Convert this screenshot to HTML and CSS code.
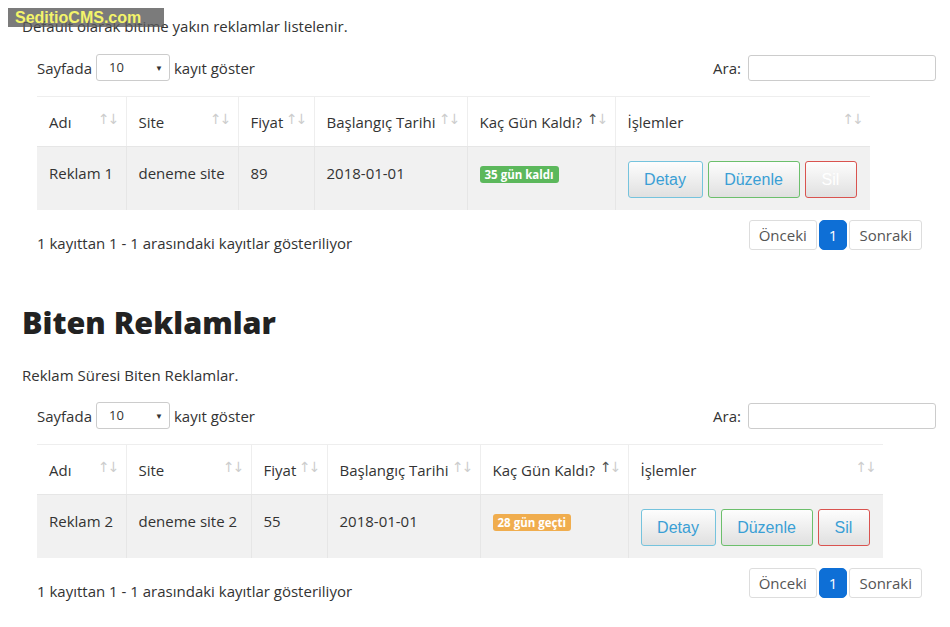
FILE: index.html
```html
<!DOCTYPE html>
<html lang="tr">
<head>
  <meta charset="UTF-8">
  <title>Reklamlar</title>
  <link rel="stylesheet" href="styles.css">
</head>
<body>
<div class="watermark">SeditioCMS.com</div>
<div class="page">
  <p class="desc first">Default olarak bitime yakın reklamlar listelenir.</p>
  <div class="dt">
    <div class="dt-top">
      <label class="length">Sayfada <span class="select">10<i class="caret">▼</i></span> kayıt göster</label>
      <label class="search">Ara: <span class="input"></span></label>
    </div>
    <table class="tbl t1">
      <colgroup>
        <col class="c-name"><col class="c-site"><col class="c-price"><col class="c-date"><col class="c-days"><col class="c-ops">
      </colgroup>
      <thead>
        <tr>
          <th>Adı<span class="sort">↑↓</span></th>
          <th>Site<span class="sort">↑↓</span></th>
          <th>Fiyat<span class="sort">↑↓</span></th>
          <th>Başlangıç Tarihi<span class="sort">↑↓</span></th>
          <th>Kaç Gün Kaldı?<span class="sort"><b>↑</b>↓</span></th>
          <th>İşlemler<span class="sort">↑↓</span></th>
        </tr>
      </thead>
      <tbody>
        <tr>
          <td>Reklam 1</td>
          <td>deneme site</td>
          <td>89</td>
          <td>2018-01-01</td>
          <td><span class="label label-green">35 gün kaldı</span></td>
          <td class="ops">
            <div class="btns">
              <a class="btn btn-info">Detay</a>
              <a class="btn btn-success">Düzenle</a>
              <a class="btn btn-danger hover">Sil</a>
            </div>
          </td>
        </tr>
      </tbody>
    </table>
    <div class="dt-bottom">
      <span class="info">1 kayıttan 1 - 1 arasındaki kayıtlar gösteriliyor</span>
      <div class="pager">
        <a class="pg">Önceki</a><a class="pg active">1</a><a class="pg">Sonraki</a>
      </div>
    </div>
  </div>

  <h2 class="title">Biten Reklamlar</h2>
  <p class="desc">Reklam Süresi Biten Reklamlar.</p>
  <div class="dt">
    <div class="dt-top">
      <label class="length">Sayfada <span class="select">10<i class="caret">▼</i></span> kayıt göster</label>
      <label class="search">Ara: <span class="input"></span></label>
    </div>
    <table class="tbl t2">
      <colgroup>
        <col class="c-name"><col class="c-site"><col class="c-price"><col class="c-date"><col class="c-days"><col class="c-ops">
      </colgroup>
      <thead>
        <tr>
          <th>Adı<span class="sort">↑↓</span></th>
          <th>Site<span class="sort">↑↓</span></th>
          <th>Fiyat<span class="sort">↑↓</span></th>
          <th>Başlangıç Tarihi<span class="sort">↑↓</span></th>
          <th>Kaç Gün Kaldı?<span class="sort"><b>↑</b>↓</span></th>
          <th>İşlemler<span class="sort">↑↓</span></th>
        </tr>
      </thead>
      <tbody>
        <tr>
          <td>Reklam 2</td>
          <td>deneme site 2</td>
          <td>55</td>
          <td>2018-01-01</td>
          <td><span class="label label-orange">28 gün geçti</span></td>
          <td class="ops">
            <div class="btns">
              <a class="btn btn-info">Detay</a>
              <a class="btn btn-success">Düzenle</a>
              <a class="btn btn-danger">Sil</a>
            </div>
          </td>
        </tr>
      </tbody>
    </table>
    <div class="dt-bottom">
      <span class="info">1 kayıttan 1 - 1 arasındaki kayıtlar gösteriliyor</span>
      <div class="pager">
        <a class="pg">Önceki</a><a class="pg active">1</a><a class="pg">Sonraki</a>
      </div>
    </div>
  </div>
</div>
</body>
</html>
```

FILE: styles.css
```css
*{
  margin: 0;
  padding: 0;
  box-sizing: border-box;
}
body{
  font-family: "Open Sans", "Noto Sans", sans-serif;
  font-size: 15px;
  color: #333;
  background: #fff;
}
.watermark{
  position: absolute;
  top: 8px;
  left: 8px;
  width: 156px;
  height: 19px;
  padding-left: 7px;
  background: rgba(90, 90, 90, 0.8);
  color: #f4f46a;
  font-family: "Liberation Sans", Arial, sans-serif;
  font-weight: bold;
  font-size: 16px;
  line-height: 19px;
  z-index: 2;
}
.page{
  padding: 0 14px 0 22px;
}
.desc{
  line-height: 20px;
  padding-top: 16px;
}
.dt{
  padding-left: 15px;
}
.dt-top{
  display: flex;
  justify-content: space-between;
  align-items: center;
  margin-top: 17px;
  height: 27px;
}
.first + .dt .dt-top{
  margin-top: 18px;
}
.length, .search{
  display: flex;
  align-items: center;
  gap: 5px;
}
.length{
  gap: 4px;
}
.select{
  position: relative;
  display: inline-block;
  width: 74px;
  height: 27px;
  border: 1px solid #ccc;
  border-radius: 3px;
  padding-left: 12px;
  font-size: 13px;
  line-height: 25px;
}
.caret{
  position: absolute;
  right: 6px;
  top: 0;
  font-style: normal;
  font-size: 8px;
}
.search{
  gap: 7px;
}
.input{
  display: inline-block;
  width: 188px;
  height: 26px;
  border: 1px solid #ccc;
  border-radius: 3px;
}
.tbl{
  border-collapse: collapse;
  table-layout: fixed;
  margin-top: 15px;
}
.t1{
  width: 833px;
}
.t2{
  width: 846px;
}
.c-name{ width: 89px; }
.t1 .c-site{ width: 112px; }
.t2 .c-site{ width: 125px; }
.c-price{ width: 76px; }
.c-date{ width: 153px; }
.c-days{ width: 148px; }
.tbl th{
  position: relative;
  height: 50px;
  padding: 0 12px;
  text-align: left;
  font-weight: normal;
  line-height: 20px;
  border-top: 1px solid #eee;
  border-left: 1px solid #eee;
  border-bottom: 1px solid #e6e6e6;
  white-space: nowrap;
}
.tbl th:first-child,
.tbl td:first-child{
  border-left: none;
}
.sort{
  position: absolute;
  right: 8px;
  top: 12px;
  color: #cdcdcd;
  font-family: "DejaVu Sans", sans-serif;
  font-size: 14px;
  letter-spacing: -2px;
}
.sort b{
  font-weight: normal;
  color: #555;
}
.tbl td{
  height: 63px;
  padding: 16px 12px 12px;
  vertical-align: top;
  line-height: 20px;
  background: #f1f1f1;
  border-left: 1px solid #e6e6e6;
  white-space: nowrap;
}
.tbl td.ops{
  padding: 14px 12px 12px;
}
.label{
  display: inline-block;
  margin-top: 2px;
  padding: 0 5px;
  height: 17px;
  border-radius: 3px;
  color: #fff;
  font-size: 11.5px;
  font-weight: bold;
  line-height: 17px;
}
.label-green{
  background: #5cb85c;
}
.label-orange{
  background: #f0ad4e;
}
.btns{
  display: flex;
  gap: 5px;
}
.btn{
  display: block;
  height: 37px;
  border: 1px solid;
  border-radius: 3px;
  font-family: "Liberation Sans", Arial, sans-serif;
  font-size: 16px;
  line-height: 35px;
  text-align: center;
  color: #3a9fd5;
  background: linear-gradient(#fdfdfd, #e0e0e0);
}
.btn-info{
  width: 75px;
  border-color: #75c3dd;
}
.btn-success{
  width: 92px;
  border-color: #6cbf6c;
}
.btn-danger{
  width: 52px;
  border-color: #d9534f;
}
.btn-danger.hover{
  color: #fff;
}
.dt-bottom{
  display: flex;
  justify-content: space-between;
  align-items: flex-start;
  margin-top: 10px;
  padding-right: 14px;
}
.info{
  padding-top: 13px;
  line-height: 20px;
}
.pager{
  display: flex;
  gap: 2px;
}
.pg{
  display: inline-block;
  height: 30px;
  padding: 0 9px;
  border: 1px solid #ddd;
  border-radius: 3px;
  line-height: 28px;
  color: #555;
}
.pg.active{
  background: #0e6fd6;
  border-color: #0e6fd6;
  color: #fff;
  border-radius: 5px;
}
.title{
  margin-top: 51px;
  font-size: 30.5px;
  font-weight: 800;
  color: #222;
  line-height: 36px;
}
.title + .desc{
  padding-top: 25px;
}
```
